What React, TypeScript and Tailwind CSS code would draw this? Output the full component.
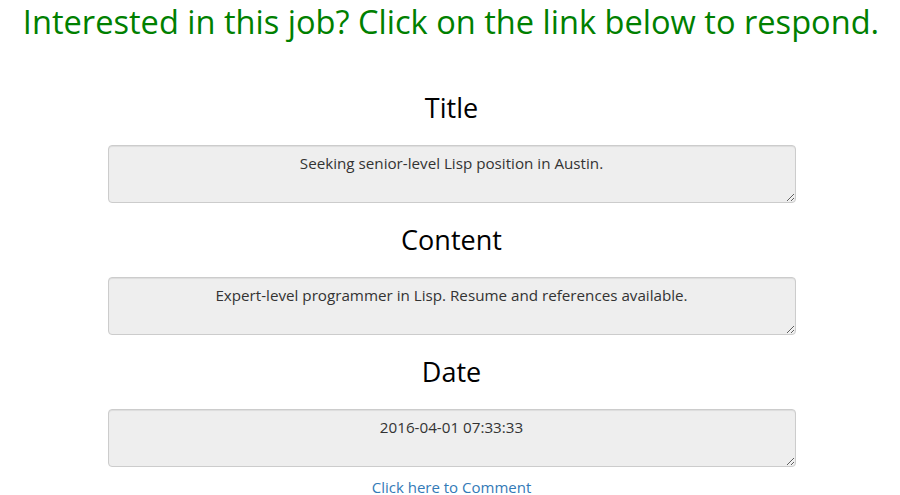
import React from "react";

const fields = [
  { label: "Title", value: "Seeking senior-level Lisp position in Austin." },
  { label: "Content", value: "Expert-level programmer in Lisp. Resume and references available." },
  { label: "Date", value: "2016-04-01 07:33:33" },
];

export default function App() {
  return (
    <div className="min-h-screen bg-white text-[#333] font-['Open_Sans',sans-serif] text-center">
      <h1 className="pt-[2px] pl-[2px] text-[32.6px] leading-[40px] whitespace-nowrap text-[#008000]">
        Interested in this job? Click on the link below to respond.
      </h1>
      <div className="mt-[50px] flex flex-col">
        {fields.map((f) => (
          <div key={f.label} className="flex flex-col items-center pl-[3px]">
            <h3 className="h-[32px] text-[27px] leading-[32px] text-black">{f.label}</h3>
            <textarea
              readOnly
              defaultValue={f.value}
              className="mt-[21px] mb-[21px] h-[58px] w-[688px] rounded-[4px] border border-[#ccc] bg-[#eee] px-3 pt-[7px] pb-[6px] text-center text-[15.2px] leading-[20px] text-[#333] shadow-[inset_0_1px_1px_rgba(0,0,0,0.075)] outline-none"
            />
          </div>
        ))}
      </div>
      <a href="#" className="-mt-[9px] block pl-[3px] text-[15px] leading-[16px] text-[#337ab7]">
        Click here to Comment
      </a>
    </div>
  );
}
